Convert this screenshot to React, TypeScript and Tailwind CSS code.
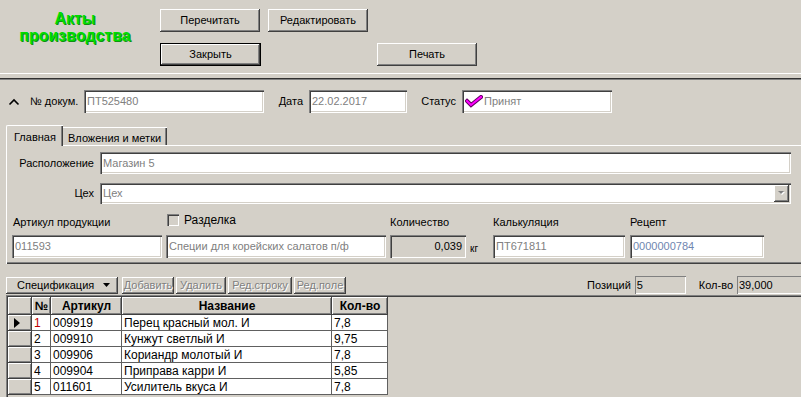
const raised =
  'bg-[#d4d0c8] shadow-[inset_-1px_-1px_0_#404040,inset_1px_1px_0_#ffffff,inset_-2px_-2px_0_#808080]';
const sunken =
  'bg-white shadow-[inset_1px_1px_0_#808080,inset_2px_2px_0_#404040,inset_-1px_-1px_0_#ffffff,inset_-2px_-2px_0_#d4d0c8]';
const sunkenGray =
  'bg-[#d4d0c8] shadow-[inset_1px_1px_0_#808080,inset_2px_2px_0_#404040,inset_-1px_-1px_0_#ffffff,inset_-2px_-2px_0_#d4d0c8]';
const staticField = 'bg-[#d4d0c8] shadow-[inset_1px_1px_0_#808080,inset_-1px_-1px_0_#ffffff]';
const disabledText = 'text-[#808080] [text-shadow:1px_1px_0_#ffffff]';

const rows = [
  { n: '1', art: '009919', name: 'Перец красный мол. И', qty: '7,8' },
  { n: '2', art: '009910', name: 'Кунжут светлый И', qty: '9,75' },
  { n: '3', art: '009906', name: 'Кориандр молотый И', qty: '7,8' },
  { n: '4', art: '009904', name: 'Приправа карри И', qty: '5,85' },
  { n: '5', art: '011601', name: 'Усилитель вкуса И', qty: '7,8' },
];

const Button = ({ label, width, isDefault }: { label: string; width: string; isDefault?: boolean }) => (
  <div className={`${width} h-[23px] ${isDefault ? 'border border-black' : ''}`}>
    <div className={`${raised} w-full h-full flex items-center justify-center text-[11px] text-black`}>
      {label}
    </div>
  </div>
);

const Field = ({ value, width, color = 'text-[#808080]', children }: { value: string; width: string; color?: string; children?: React.ReactNode }) => (
  <div className={`${sunken} ${width} h-[23px] flex items-center pl-[3px] text-[11px] ${color}`}>
    {children}
    {value}
  </div>
);

const ToolButton = ({ label, width }: { label: string; width: string }) => (
  <div className={`${raised} ${width} h-[17px] flex items-center justify-center text-[11px] ${disabledText}`}>
    {label}
  </div>
);

export default function App() {
  return (
    <div className="w-[801px] h-[397px] overflow-hidden bg-[#d4d0c8] font-['Liberation_Sans',Arial,sans-serif] text-black select-none">
      {/* top */}
      <div className="h-[73px] flex">
        <div className="w-[150px] pt-[10px] text-center text-[16px] font-bold leading-[17px] text-[#00dd00] [text-shadow:1px_1px_0_#109010]">
          Акты
          <br />
          производства
        </div>
        <div className="ml-[10px] pt-[9px] flex flex-col gap-[11px]">
          <div className="flex gap-[8px]">
            <Button label="Перечитать" width="w-[100px]" />
            <Button label="Редактировать" width="w-[100px]" />
          </div>
          <div className="flex gap-[116px]">
            <Button label="Закрыть" width="w-[101px]" isDefault />
            <Button label="Печать" width="w-[100px]" />
          </div>
        </div>
      </div>
      <div className="h-px bg-white" />
      <div className="h-[4px]" />
      <div className="h-px bg-[#303030]" />
      <div className="h-px bg-[#808080]" />

      {/* document header */}
      <div className="mt-[10px] h-[23px] flex items-center text-[11px]">
        <div className="w-[28px] pl-[8px]">
          <svg width="12" height="8" viewBox="0 0 12 8">
            <polyline points="1.5,6.5 6,2 10.5,6.5" fill="none" stroke="#000000" strokeWidth="1.6" />
          </svg>
        </div>
        <div className="w-[56px] pl-[2px]">№ докум.</div>
        <Field value="ПТ525480" width="w-[180px]" />
        <div className="w-[45px] text-right pr-[6px]">Дата</div>
        <Field value="22.02.2017" width="w-[98px]" />
        <div className="w-[55px] text-right pr-[6px]">Статус</div>
        <Field value="Принят" width="w-[150px]">
          <svg width="18" height="13" viewBox="0 0 18 13" className="mr-[1px]">
            <polyline points="2,6 6,10 16,2" fill="none" stroke="#600060" strokeWidth="4" strokeLinecap="square" />
            <polyline points="2,6 6,10 16,2" fill="none" stroke="#ff00ff" strokeWidth="2" strokeLinecap="square" />
          </svg>
        </Field>
      </div>

      {/* tabs */}
      <div className="mt-[12px] h-[20px] flex items-end pl-[6px] text-[11px] relative z-10">
        <div className="w-[57px] h-[21px] -mb-px bg-[#d4d0c8] border-t border-l border-white rounded-tl-[2px] shadow-[inset_-1px_0_0_#404040,inset_-2px_0_0_#808080] pl-[7px] pt-[3px]">
          Главная
        </div>
        <div className="w-[104px] h-[18px] bg-[#d4d0c8] border-t border-white shadow-[inset_-1px_0_0_#404040,inset_-2px_0_0_#808080] pl-[5px] pt-[2px]">
          Вложения и метки
        </div>
      </div>

      {/* tab pane */}
      <div className="ml-[6px] h-[119px] border-t border-l border-white shadow-[inset_0_-1px_0_#404040,inset_0_-2px_0_#808080] text-[11px]">
        <div className="mt-[6px] flex items-center">
          <div className="w-[88px] text-right pr-[1px]">Расположение</div>
          <div className="ml-[5px] flex-1 mr-[10px]">
            <div className={`${sunken} h-[22px] flex items-center pl-[3px] text-[#808080]`}>Магазин 5</div>
          </div>
        </div>
        <div className="mt-[9px] flex items-center">
          <div className="w-[88px] text-right pr-[1px]">Цех</div>
          <div className="ml-[5px] flex-1 mr-[10px]">
            <div className={`${sunken} h-[21px] flex items-center pl-[3px] text-[#808080]`}>
              <span className="flex-1">Цех</span>
              <div className={`${raised} w-[15px] h-[17px] mr-[2px] flex items-center justify-center`}>
                <svg width="7" height="5" viewBox="0 0 7 5">
                  <polygon points="1,1 7,1 4,4" fill="#ffffff" />
                  <polygon points="0,0 6,0 3,3" fill="#808080" />
                </svg>
              </div>
            </div>
          </div>
        </div>

        <div className="mt-[8px] flex">
          <div className="ml-[5px] w-[150px] flex flex-col">
            <div className="h-[16px] pl-[1px] flex items-center pt-[4px]">Артикул продукции</div>
            <div className="mt-[7px]">
              <Field value="011593" width="w-[150px]" />
            </div>
          </div>
          <div className="ml-[4px] w-[220px] flex flex-col">
            <div className="h-[16px] pl-[1px] flex items-center">
              <div className="w-[12px] h-[12px] bg-[#d4d0c8] shadow-[inset_1px_1px_0_#808080,inset_2px_2px_0_#404040,inset_-1px_-1px_0_#ffffff]" />
              <span className="ml-[5px] text-[12px]">Разделка</span>
            </div>
            <div className="mt-[7px]">
              <Field value="Специи для корейских салатов п/ф" width="w-[220px]" />
            </div>
          </div>
          <div className="ml-[4px] w-[99px] flex flex-col">
            <div className="h-[16px] flex items-center pt-[4px]">Количество</div>
            <div className="mt-[7px] flex items-center">
              <div className={`${sunkenGray} w-[76px] h-[23px] flex items-center justify-end pr-[4px] text-[11px]`}>0,039</div>
              <span className="ml-[4px] mt-[3px] text-[10px]">кг</span>
            </div>
          </div>
          <div className="ml-[4px] w-[132px] flex flex-col">
            <div className="h-[16px] flex items-center pt-[4px]">Калькуляция</div>
            <div className="mt-[7px]">
              <Field value="ПТ671811" width="w-[132px]" />
            </div>
          </div>
          <div className="ml-[5px] w-[134px] flex flex-col">
            <div className="h-[16px] flex items-center pt-[4px]">Рецепт</div>
            <div className="mt-[7px]">
              <Field value="0000000784" width="w-[134px]" color="text-[#6f86b0]" />
            </div>
          </div>
        </div>
      </div>

      {/* toolbar */}
      <div className="mt-[12px] h-[18px] flex items-center text-[11px]">
        <div className={`${raised} ml-[6px] w-[112px] h-[17px] flex items-center pl-[11px]`}>
          <span className="flex-1">Спецификация</span>
          <svg width="7" height="4" viewBox="0 0 7 4" className="mr-[8px]">
            <polygon points="0,0 7,0 3.5,4" fill="#000000" />
          </svg>
        </div>
        <div className="ml-[4px] flex gap-[2px]">
          <ToolButton label="Добавить" width="w-[52px]" />
          <ToolButton label="Удалить" width="w-[50px]" />
          <ToolButton label="Ред.строку" width="w-[64px]" />
          <ToolButton label="Ред.поле" width="w-[52px]" />
        </div>
        <div className="flex-1" />
        <span className="mr-[4px]">Позиций</span>
        <div className={`${staticField} w-[51px] h-[18px] flex items-center pl-[2px]`}>5</div>
        <span className="ml-[13px] mr-[4px]">Кол-во</span>
        <div className={`${staticField} w-[70px] h-[18px] flex items-center pl-[2px] -mr-[6px]`}>39,000</div>
      </div>

      {/* grid */}
      <div className="mt-px ml-[6px] h-[110px] border-t border-l border-[#808080]">
        <div className="h-full border-t border-l border-[#404040] text-[12px]">
          <div className="flex h-[18px]">
            <div className={`${raised} w-[24px] h-full`} />
            <div className={`${raised} w-[19px] h-full flex items-center justify-center font-bold`}>№</div>
            <div className={`${raised} w-[71px] h-full flex items-center justify-center font-bold`}>Артикул</div>
            <div className={`${raised} w-[210px] h-full flex items-center justify-center font-bold`}>Название</div>
            <div className={`${raised} w-[56px] h-full flex items-center justify-center font-bold`}>Кол-во</div>
          </div>
          {rows.map((r, i) => (
            <div key={r.n} className="flex h-[16px]">
              <div className={`${raised} w-[24px] h-full flex items-center pl-[6px]`}>
                {i === 0 && (
                  <svg width="6" height="10" viewBox="0 0 6 10">
                    <polygon points="0,0 6,5 0,10" fill="#000000" />
                  </svg>
                )}
              </div>
              <div className={`w-[19px] h-full bg-white border-r border-b border-[#606060] pl-[2px] pt-[1px] leading-[14px] ${i === 0 ? 'text-[#c00000]' : ''}`}>{r.n}</div>
              <div className="w-[71px] h-full bg-white border-r border-b border-[#606060] pl-[2px] pt-[1px] leading-[14px]">{r.art}</div>
              <div className="w-[210px] h-full bg-white border-r border-b border-[#606060] pl-[2px] pt-[1px] leading-[14px]">{r.name}</div>
              <div className="w-[56px] h-full bg-white border-r border-b border-[#606060] pl-[2px] pt-[1px] leading-[14px]">{r.qty}</div>
            </div>
          ))}
        </div>
      </div>
    </div>
  );
}
